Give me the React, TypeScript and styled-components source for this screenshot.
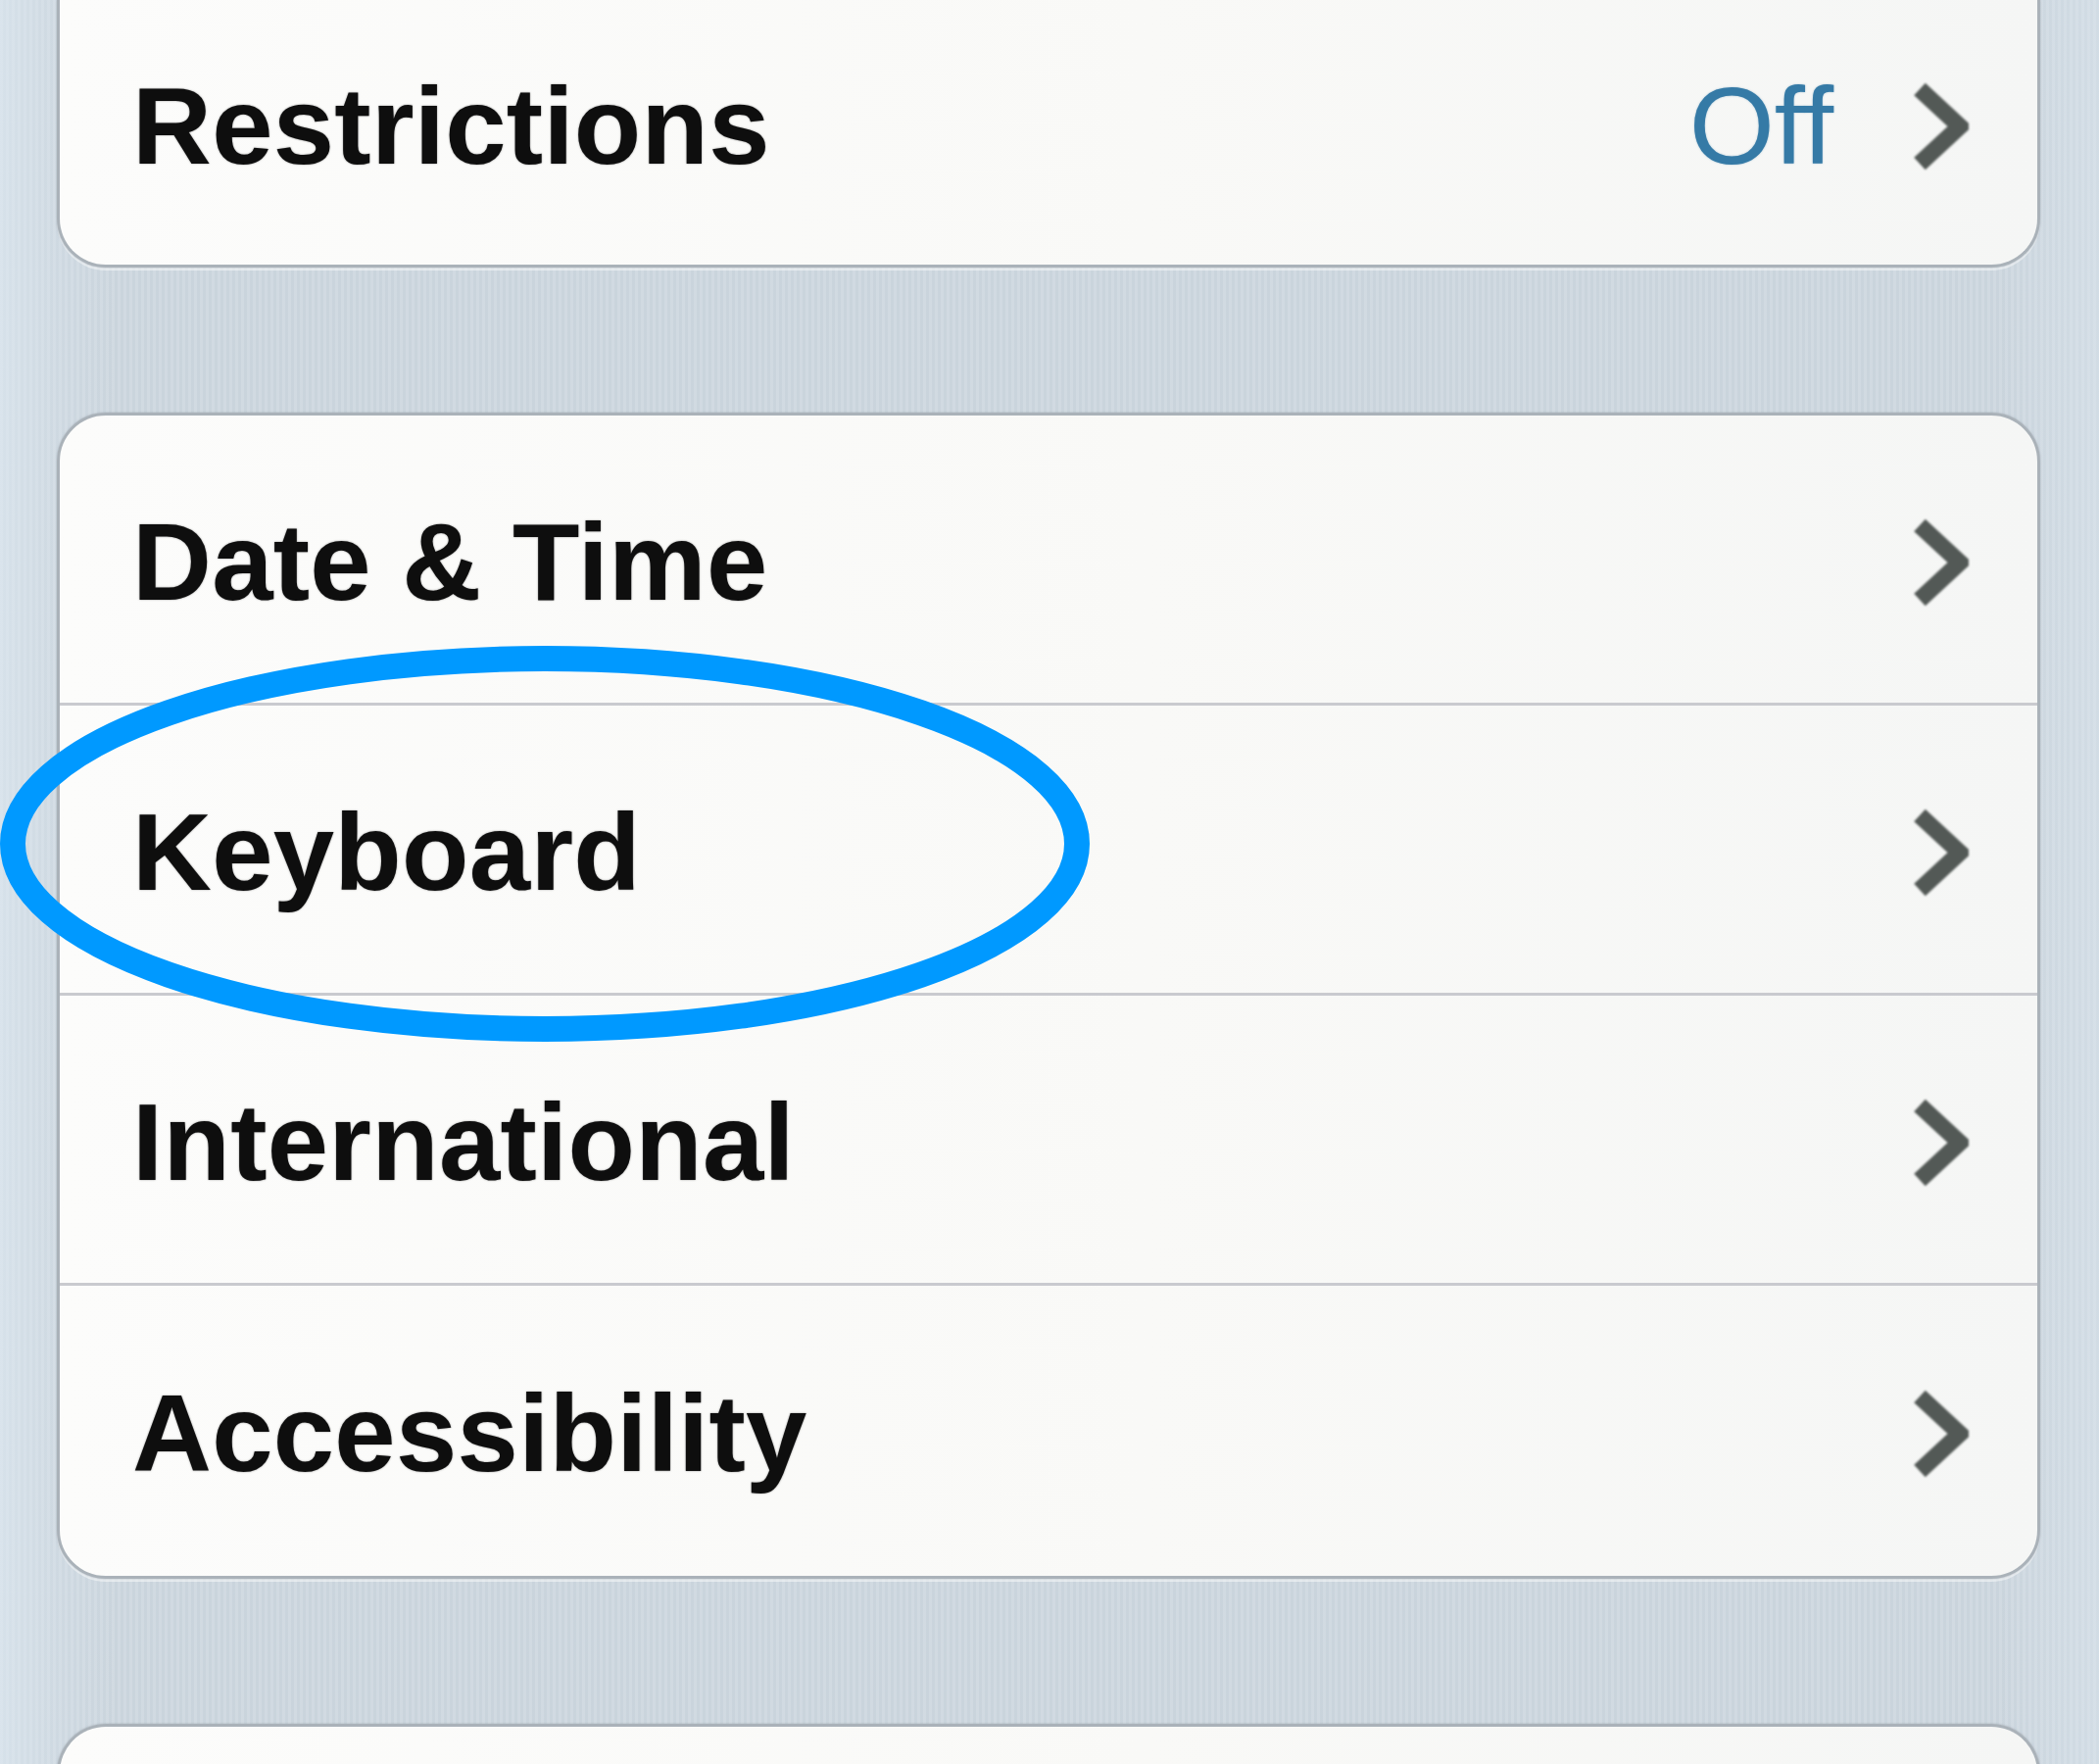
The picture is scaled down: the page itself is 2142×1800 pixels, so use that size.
import React from "react";
import styled, { createGlobalStyle } from "styled-components";

const GlobalStyle = createGlobalStyle`
  html, body {
    margin: 0;
    padding: 0;
    background: #cfd9e1;
  }
  body {
    font-family: "Liberation Sans", Arial, Helvetica, sans-serif;
    overflow: hidden;
  }
`;

const Screen = styled.div`
  position: relative;
  width: 2142px;
  height: 1800px;
  overflow: hidden;
  box-sizing: border-box;
  padding: 0 60px 0 58px;
  display: flex;
  flex-direction: column;
  gap: 148px;
  background-color: #cdd7df;
  background-image: linear-gradient(
      90deg,
      rgba(225, 236, 245, 0.55) 0px,
      rgba(225, 236, 245, 0.2) 58px,
      rgba(255, 255, 255, 0) 120px,
      rgba(255, 255, 255, 0) 2040px,
      rgba(225, 236, 245, 0.35) 2142px
    ),
    repeating-linear-gradient(
      90deg,
      rgba(255, 255, 255, 0.08) 0px,
      rgba(255, 255, 255, 0.08) 3px,
      rgba(150, 165, 178, 0.06) 3px,
      rgba(150, 165, 178, 0.06) 6px
    );
`;

const Card = styled.div<{ $continued?: boolean; $open?: boolean }>`
  flex-shrink: 0;
  display: flex;
  flex-direction: column;
  background: linear-gradient(90deg, #fcfcfb 0%, #f9f9f7 55%, #f5f6f5 100%);
  border: 3px solid #aab2b9;
  border-radius: 50px;
  box-shadow: 0 0 2px rgba(120, 130, 140, 0.5), 0 3px 0 rgba(255, 255, 255, 0.5);
  ${(p) =>
    p.$continued &&
    `
    border-top: none;
    border-top-left-radius: 0;
    border-top-right-radius: 0;
  `}
  ${(p) =>
    p.$open &&
    `
    border-bottom: none;
    border-bottom-left-radius: 0;
    border-bottom-right-radius: 0;
    height: 80px;
  `}
`;

const Row = styled.div<{ $height: number; $shift?: number }>`
  box-sizing: border-box;
  height: ${(p) => p.$height}px;
  display: flex;
  align-items: center;
  padding: ${(p) => ((p.$shift ?? 6) > 0 ? `${p.$shift ?? 6}px` : "0")} 70px
    ${(p) => ((p.$shift ?? 6) < 0 ? `${-(p.$shift ?? 6)}px` : "0")} 74px;
  border-bottom: 3px solid #c9cacf;
  &:last-child {
    border-bottom: none;
  }
`;

const Label = styled.span`
  flex: 1;
  font-size: 112px;
  line-height: 1;
  font-weight: 700;
  color: #0e0e0e;
  letter-spacing: 0.3px;
  text-shadow: 0 0 2px rgba(0, 0, 0, 0.45);
  white-space: nowrap;
`;

const Value = styled.span`
  font-size: 112px;
  line-height: 1;
  font-weight: 400;
  color: #357aa6;
  margin-right: 80px;
  text-shadow: 0 0 2px rgba(53, 122, 166, 0.45);
`;

const ChevronSvg = styled.svg`
  width: 58px;
  height: 88px;
  flex-shrink: 0;
  filter: blur(0.8px);
`;

const Chevron = () => (
  <ChevronSvg viewBox="0 0 58 88">
    <polyline
      points="8,6 49,44 8,82"
      fill="none"
      stroke="#535956"
      strokeWidth="17"
      strokeLinejoin="miter"
      strokeMiterlimit={3}
    />
  </ChevronSvg>
);

const Annotation = styled.svg`
  position: absolute;
  left: 0;
  top: 0;
  width: 2142px;
  height: 1800px;
  pointer-events: none;
`;

type Item = { label: string; value?: string };

const group: Item[] = [
  { label: "Date & Time" },
  { label: "Keyboard" },
  { label: "International" },
  { label: "Accessibility" },
];

export default function App() {
  return (
    <>
      <GlobalStyle />
      <Screen>
        <Card $continued>
          <Row $height={270} $shift={-12}>
            <Label>Restrictions</Label>
            <Value>Off</Value>
            <Chevron />
          </Row>
        </Card>
        <Card>
          {group.map((item) => (
            <Row key={item.label} $height={296}>
              <Label>{item.label}</Label>
              {item.value && <Value>{item.value}</Value>}
              <Chevron />
            </Row>
          ))}
        </Card>
        <Card $open />
        <Annotation viewBox="0 0 2142 1800">
          <ellipse
            cx="556"
            cy="861"
            rx="543"
            ry="189"
            fill="none"
            stroke="#0099ff"
            strokeWidth="26"
          />
        </Annotation>
      </Screen>
    </>
  );
}
